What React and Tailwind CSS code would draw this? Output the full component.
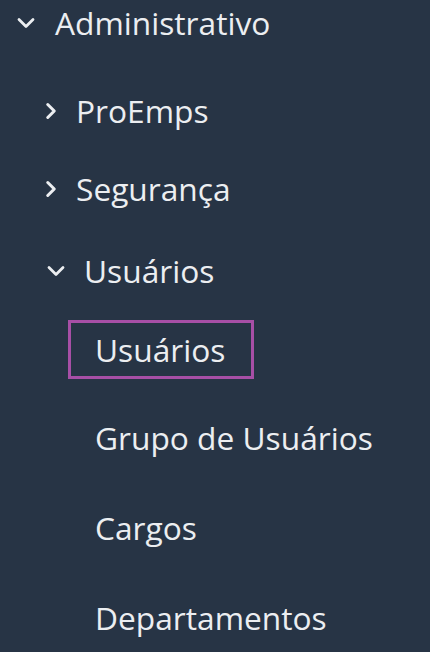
import React from 'react';
import { ChevronDown, ChevronRight } from 'lucide-react';

export default function App() {
  return (
    <div
      className="w-[430px] h-[652px] overflow-hidden bg-[#273445] text-[#eceef1] text-[31.7px] leading-[42px]"
      style={{ fontFamily: '"Open Sans", sans-serif' }}
    >
      <nav className="flex flex-col pt-[2px]">
        {/* Administrativo */}
        <div className="flex items-center h-[42px] pl-[12px]">
          <ChevronDown size={28} strokeWidth={2.4} className="shrink-0" />
          <span className="ml-[15px]">Administrativo</span>
        </div>

        {/* ProEmps */}
        <div className="flex items-center h-[42px] pl-[38px] mt-[46px]">
          <ChevronRight size={26} strokeWidth={2.8} className="shrink-0" />
          <span className="ml-[12px]">ProEmps</span>
        </div>

        {/* Segurança */}
        <div className="flex items-center h-[42px] pl-[38px] mt-[36px]">
          <ChevronRight size={26} strokeWidth={2.8} className="shrink-0" />
          <span className="ml-[12px]">Segurança</span>
        </div>

        {/* Usuários group */}
        <div className="flex items-center h-[42px] pl-[42px] mt-[40px]">
          <ChevronDown size={28} strokeWidth={2.4} className="shrink-0" />
          <span className="ml-[14px]">Usuários</span>
        </div>

        <div className="pl-[68px] mt-[28px]">
          <div className="inline-flex items-center h-[59px] w-[186px] pl-[24px] border-[3px] border-[#a74fa6]">
            Usuários
          </div>
        </div>

        <div className="h-[42px] pl-[95px] mt-[38px]">Grupo de Usuários</div>
        <div className="h-[42px] pl-[95px] mt-[48px]">Cargos</div>
        <div className="h-[42px] pl-[95px] mt-[48px]">Departamentos</div>
      </nav>
    </div>
  );
}
